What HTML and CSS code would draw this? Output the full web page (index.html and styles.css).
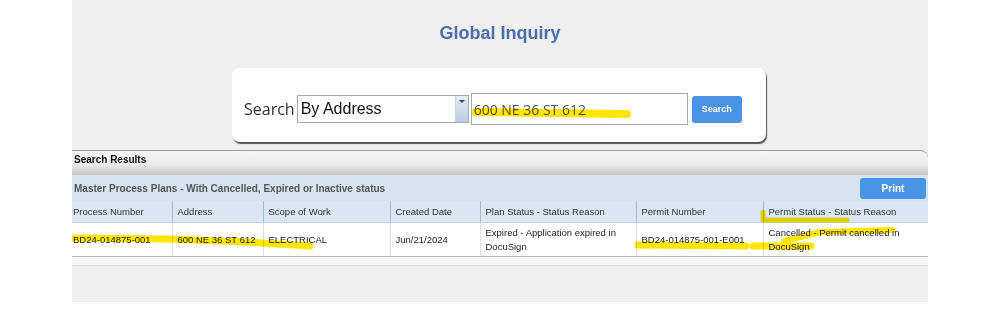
FILE: index.html
```html
<!DOCTYPE html>
<html lang="en">
<head>
  <meta charset="UTF-8">
  <title>Global Inquiry</title>
  <meta name="viewport" content="width=device-width, initial-scale=1.0">
  <link rel="stylesheet" href="styles.css">
</head>
<body>
  <div class="page">
    <h1 class="title">Global Inquiry</h1>

    <div class="search-card">
      <label class="search-label">Search</label>
      <div class="select">
        <span>By Address</span>
        <span class="select-arrow"></span>
      </div>
      <div class="text-input">600 NE 36 ST 612</div>
      <button class="btn btn-search">Search</button>
    </div>

    <div class="results">
      <div class="results-bar">Search Results</div>
      <div class="plans-bar">
        <span>Master Process Plans - With Cancelled, Expired or Inactive status</span>
        <button class="btn btn-print">Print</button>
      </div>
      <table class="grid">
        <colgroup>
          <col class="c-process">
          <col class="c-address">
          <col class="c-scope">
          <col class="c-date">
          <col class="c-plan">
          <col class="c-permit">
          <col>
        </colgroup>
        <thead>
          <tr>
            <th>Process Number</th>
            <th>Address</th>
            <th>Scope of Work</th>
            <th>Created Date</th>
            <th>Plan Status - Status Reason</th>
            <th>Permit Number</th>
            <th>Permit Status - Status Reason</th>
          </tr>
        </thead>
        <tbody>
          <tr>
            <td>BD24-014875-001</td>
            <td>600 NE 36 ST 612</td>
            <td>ELECTRICAL</td>
            <td>Jun/21/2024</td>
            <td>Expired - Application expired in DocuSign</td>
            <td>BD24-014875-001-E001</td>
            <td>Cancelled - Permit cancelled in DocuSign</td>
          </tr>
        </tbody>
      </table>
      <div class="results-foot"></div>
    </div>

    <!-- marker strokes drawn over the screenshot -->
    <svg class="marker" viewBox="72 0 856 302" width="856" height="302">
      <g fill="none" stroke="#ffe600" stroke-linecap="round" stroke-linejoin="round">
        <path d="M476 112 L627 114" stroke-width="8"/>
        <path d="M73 238 L170 239 L245 242 L310 246" stroke-width="7"/>
        <path d="M638 245 L746 246" stroke-width="7"/>
        <path d="M753 246 L811 246" stroke-width="7"/>
        <path d="M784 241 L820 232 L892 230" stroke-width="6"/>
        <path d="M763 212 L763 220 L847 220" stroke-width="5"/>
      </g>
    </svg>
  </div>
</body>
</html>
```

FILE: styles.css
```css
body {
  margin: 0;
  background: #ffffff;
  font-family: "Liberation Sans", Arial, sans-serif;
}

.page {
  position: relative;
  margin-left: 72px;
  width: 856px;
  height: 302px;
  background: #efefef;
}

.title {
  margin: 0;
  padding-top: 22px;
  line-height: 22px;
  font-size: 18px;
  font-weight: bold;
  color: #4b6eaf;
  text-align: center;
}

.search-card {
  display: flex;
  align-items: center;
  box-sizing: border-box;
  width: 534px;
  height: 74px;
  margin: 24px 0 0 160px;
  padding: 8px 12px 0;
  background: #ffffff;
  border-radius: 8px;
  box-shadow: 1px 2px 1px rgba(0, 0, 0, 0.65);
}

.search-label {
  font-family: "Open Sans", sans-serif;
  font-size: 16px;
  color: #333;
  margin-right: 2px;
}

.select {
  display: flex;
  align-items: center;
  justify-content: space-between;
  box-sizing: border-box;
  width: 172px;
  height: 28px;
  border: 1px solid #a9a9a9;
  padding-left: 3px;
  font-size: 16px;
  color: #111;
}

.select-arrow {
  position: relative;
  align-self: stretch;
  width: 12px;
  background: linear-gradient(#e6eef8, #b9cbe3);
  border-left: 1px solid #c9d3e0;
}

.select-arrow::after {
  content: "";
  position: absolute;
  left: 3px;
  top: 4px;
  border-left: 3px solid transparent;
  border-right: 3px solid transparent;
  border-top: 3px solid #444;
}

.text-input {
  display: flex;
  align-items: center;
  box-sizing: border-box;
  width: 217px;
  height: 32px;
  margin-left: 2px;
  padding-left: 2px;
  border: 1px solid #a9a9a9;
  font-family: "Open Sans", sans-serif;
  font-size: 14px;
  color: #555;
}

.btn {
  border: none;
  border-radius: 3px;
  background: #4a94e8;
  color: #ffffff;
  font-family: "Liberation Sans", Arial, sans-serif;
  font-weight: bold;
  padding: 0;
  cursor: pointer;
}

.btn-search {
  width: 50px;
  height: 27px;
  margin-left: 4px;
  font-size: 9px;
}

.results {
  margin-top: 8px;
}

.results-bar {
  box-sizing: border-box;
  height: 25px;
  padding: 3px 0 0 2px;
  border-top: 1px solid #9a9a9a;
  border-top-right-radius: 8px;
  background: linear-gradient(#f6f6f6 0%, #ebebeb 55%, #c6c6c6 100%);
  font-size: 10px;
  font-weight: bold;
  color: #111;
}

.plans-bar {
  display: flex;
  align-items: center;
  justify-content: space-between;
  height: 26px;
  padding: 0 2px;
  background: #d5e3f3;
  font-size: 10px;
  font-weight: bold;
  color: #555;
}

.btn-print {
  width: 66px;
  height: 21px;
  font-size: 10px;
}

.grid {
  width: 100%;
  border-collapse: collapse;
  table-layout: fixed;
  font-size: 9.5px;
}

.c-process { width: 100px; }
.c-address { width: 91px; }
.c-scope { width: 127px; }
.c-date { width: 90px; }
.c-plan { width: 156px; }
.c-permit { width: 127px; }

.grid th {
  height: 21px;
  padding: 0 0 0 5px;
  background: #dbe6f4;
  border-left: 1px solid #a7bad6;
  border-bottom: 1px solid #c7d4e6;
  font-weight: normal;
  text-align: left;
  white-space: nowrap;
  color: #333;
}

.grid td {
  height: 33px;
  padding: 0 4px 0 5px;
  background: #ffffff;
  border-left: 1px solid #dedede;
  border-bottom: 1px solid #b3b3b3;
  line-height: 14px;
  color: #222;
}

.grid th:first-child,
.grid td:first-child {
  border-left: none;
  padding-left: 1px;
}

.grid td:nth-child(2) {
  white-space: nowrap;
}

.results-foot {
  height: 8px;
  background: #f6f6f6;
  border-bottom: 1px solid #dcdcdc;
}

.marker {
  position: absolute;
  left: 0;
  top: 0;
  pointer-events: none;
  mix-blend-mode: multiply;
}
```
